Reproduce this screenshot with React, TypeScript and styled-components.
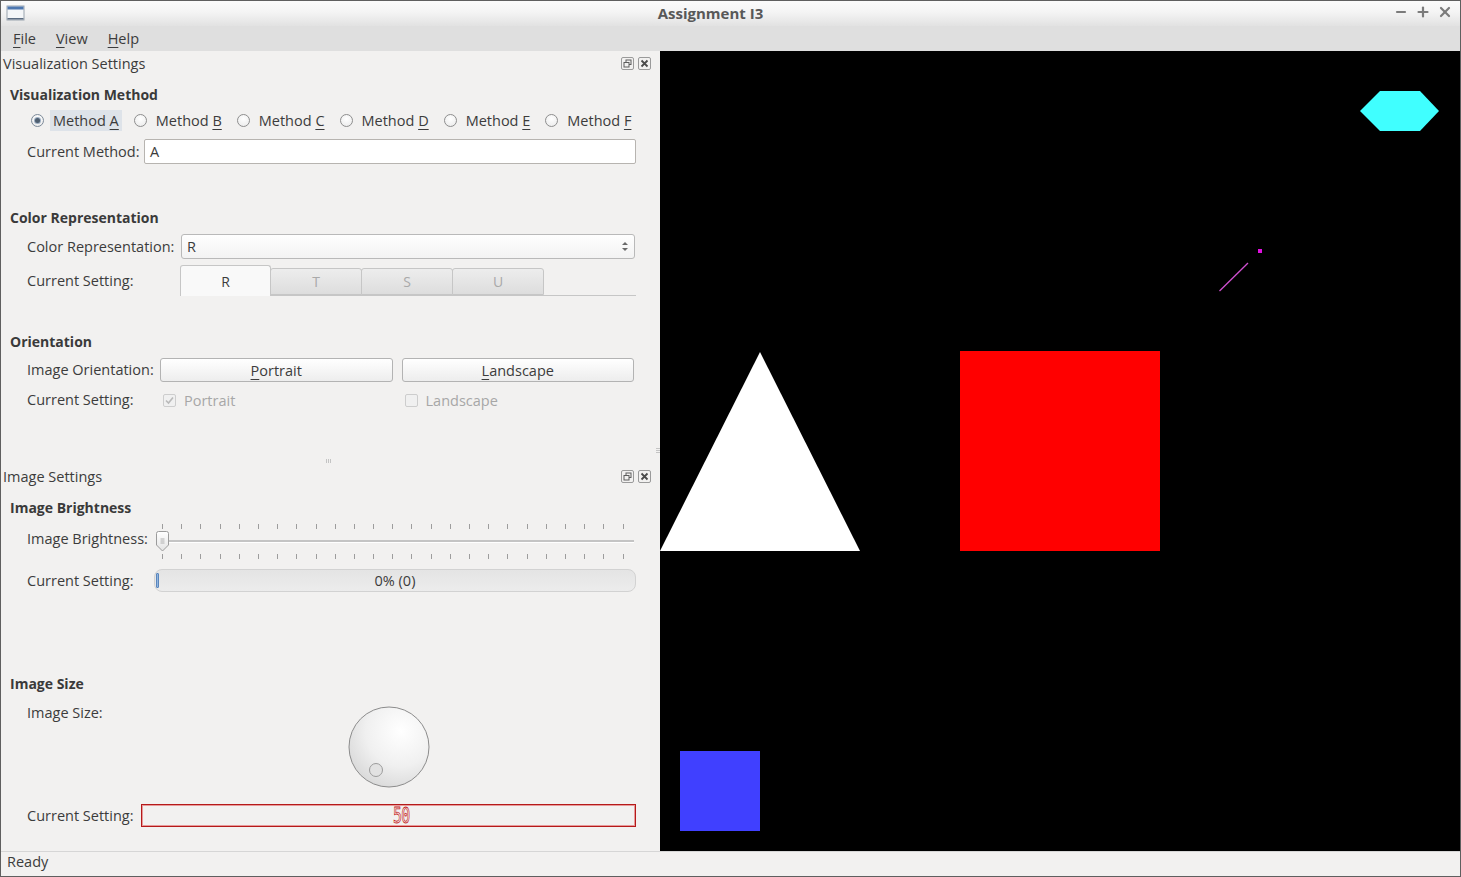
import React from 'react';
import styled, { createGlobalStyle } from 'styled-components';

const GlobalStyle = createGlobalStyle`
  html, body {
    margin: 0;
    padding: 0;
    background: #f2f1f0;
  }
  body {
    font-family: "Open Sans", "Liberation Sans", sans-serif;
    font-size: 14.5px;
    color: #3c3c3c;
  }
  * {
    box-sizing: border-box;
  }
  u {
    text-decoration-thickness: 1px;
    text-underline-offset: 3px;
  }
`;

const Window = styled.div`
  width: 1461px;
  height: 877px;
  border: 1px solid #5f5f5f;
  display: flex;
  flex-direction: column;
  background: #f2f1f0;
  overflow: hidden;
`;

const TitleBar = styled.div`
  height: 25px;
  flex-shrink: 0;
  display: grid;
  grid-template-columns: 30px 1fr 70px;
  align-items: center;
  background: linear-gradient(#fbfbfb, #f4f4f4 45%, #e2e2e2);
`;

const TitleText = styled.div`
  text-align: center;
  font-weight: 700;
  font-size: 15px;
  color: #585858;
  margin-top: -2px;
`;

const WinControls = styled.div`
  display: flex;
  gap: 10px;
  align-items: center;
  justify-content: flex-end;
  padding: 0 9px 3px 0;
`;

const MenuBar = styled.div`
  height: 25px;
  flex-shrink: 0;
  display: flex;
  align-items: center;
  padding-left: 2px;
  background: #dfdfdf;
`;

const MenuItem = styled.div`
  padding: 0 10px;
  line-height: 25px;
`;

const Main = styled.div`
  height: 800px;
  flex-shrink: 0;
  display: flex;
`;

const LeftPanel = styled.div`
  width: 659px;
  flex-shrink: 0;
  display: flex;
`;

const DockColumn = styled.div`
  width: 654px;
  display: flex;
  flex-direction: column;
`;

const VHandle = styled.div`
  width: 5px;
  display: flex;
  align-items: center;
  justify-content: center;
  padding-bottom: 2px;
`;

const HGrip = styled.div`
  display: flex;
  flex-direction: column;
  gap: 1px;
  & > span {
    display: block;
    width: 4px;
    height: 1px;
    background: #c4c4c4;
  }
`;

const Dock = styled.div<{ $h: number }>`
  height: ${(p) => p.$h}px;
  flex-shrink: 0;
  display: flex;
  flex-direction: column;
`;

const Splitter = styled.div`
  height: 8px;
  flex-shrink: 0;
  display: flex;
  justify-content: center;
  align-items: center;
  padding-top: 2px;
`;

const VGrip = styled.div`
  display: flex;
  gap: 1px;
  & > span {
    display: block;
    width: 1px;
    height: 4px;
    background: #c4c4c4;
  }
`;

const DockTitle = styled.div`
  height: 24px;
  display: flex;
  align-items: center;
  justify-content: space-between;
  padding: 0 4px 0 2px;
`;

const DockButtons = styled.div`
  display: flex;
  gap: 4px;
`;

const Group = styled.div`
  display: flex;
  flex-direction: column;
  padding: 0 19px 0 9px;
`;

const GroupTitle = styled.div<{ $mt: number }>`
  margin-top: ${(p) => p.$mt}px;
  height: 20px;
  line-height: 20px;
  font-weight: 700;
  font-size: 14px;
  color: #3a3a3a;
`;

const FormRow = styled.div<{ $label: number; $mt: number; $h: number; $align?: string }>`
  margin-top: ${(p) => p.$mt}px;
  height: ${(p) => p.$h}px;
  display: grid;
  grid-template-columns: ${(p) => p.$label}px minmax(0, 1fr);
  align-items: ${(p) => p.$align || 'center'};
  padding-left: 17px;
`;

const Label = styled.div<{ $shift?: number }>`
  line-height: 20px;
  white-space: nowrap;
  margin-top: ${(p) => p.$shift || 0}px;
`;

const RadioRow = styled.div`
  margin-top: 4px;
  height: 22px;
  display: flex;
  align-items: center;
  gap: 12px;
  padding-left: 21px;
  white-space: nowrap;
`;

const RadioItem = styled.div`
  display: flex;
  align-items: center;
  gap: 6px;
  flex-shrink: 0;
`;

const RadioCircle = styled.span<{ $checked?: boolean }>`
  width: 13px;
  height: 13px;
  flex-shrink: 0;
  border-radius: 50%;
  border: 1px solid ${(p) => (p.$checked ? '#7d8a99' : '#8e8e8e')};
  background: radial-gradient(circle at 50% 35%, #ffffff, #e9e9e9);
  display: flex;
  align-items: center;
  justify-content: center;
  &::after {
    content: '';
    display: ${(p) => (p.$checked ? 'block' : 'none')};
    width: 5px;
    height: 5px;
    border-radius: 50%;
    background: #4f5f70;
    box-shadow: 0 0 0 1px #9fb0c4;
  }
`;

const RadioText = styled.span<{ $focus?: boolean }>`
  padding: 0 3px;
  line-height: 21px;
  white-space: nowrap;
  background: ${(p) => (p.$focus ? '#dee3e9' : 'transparent')};
`;

const LineEdit = styled.div`
  height: 25px;
  background: #fff;
  border: 1px solid #b7b4b0;
  border-radius: 2px;
  padding-left: 5px;
  line-height: 23px;
`;

const Combo = styled.div`
  height: 25px;
  margin-right: 1px;
  border: 1px solid #b9b9b9;
  border-radius: 3px;
  background: linear-gradient(#fefefe, #f3f3f3);
  display: flex;
  align-items: center;
  justify-content: space-between;
  padding: 0 6px 0 5px;
`;

const ComboArrows = styled.div`
  display: flex;
  flex-direction: column;
  gap: 3px;
  & > span {
    width: 0;
    height: 0;
    border-left: 3px solid transparent;
    border-right: 3px solid transparent;
  }
  & > span:first-child {
    border-bottom: 3px solid #6a6a6a;
  }
  & > span:last-child {
    border-top: 3px solid #6a6a6a;
  }
`;

const TabBar = styled.div`
  height: 30px;
  margin-left: -1px;
  display: flex;
  align-items: flex-end;
  border-bottom: 1px solid #c6c6c6;
`;

const Tab = styled.div<{ $active?: boolean }>`
  width: ${(p) => (p.$active ? 91 : 92)}px;
  height: ${(p) => (p.$active ? 31 : 27)}px;
  margin-bottom: ${(p) => (p.$active ? -1 : 0)}px;
  margin-right: -1px;
  display: flex;
  align-items: center;
  justify-content: center;
  font-size: 14px;
  border: 1px solid #c6c6c6;
  border-bottom: ${(p) => (p.$active ? 'none' : '1px solid #c6c6c6')};
  border-radius: 3px 3px 0 0;
  color: ${(p) => (p.$active ? '#3c3c3c' : '#a9a9a9')};
  background: ${(p) => (p.$active ? '#f9f9f9' : 'linear-gradient(#ededed, #dddddd)')};
  position: relative;
  z-index: ${(p) => (p.$active ? 1 : 0)};
`;

const PairGrid = styled.div`
  display: grid;
  grid-template-columns: 1fr 1fr;
  gap: 9px;
  padding-right: 2px;
  height: 100%;
  align-items: center;
`;

const PushButton = styled.div`
  height: 24px;
  border: 1px solid #b3b3b3;
  border-radius: 3px;
  background: linear-gradient(#ffffff, #ededed);
  display: flex;
  align-items: center;
  justify-content: center;
`;

const CheckItem = styled.div`
  display: flex;
  align-items: center;
  gap: 8px;
  padding-left: 3px;
  color: #a7a7a7;
`;

const CheckBox = styled.span`
  width: 13px;
  height: 13px;
  border: 1px solid #cdcdcd;
  border-radius: 2px;
  background: #f0f0f0;
  display: flex;
  align-items: center;
  justify-content: center;
`;

const Slider = styled.div`
  position: relative;
  height: 39px;
  display: flex;
  flex-direction: column;
  justify-content: space-between;
  padding: 3px 0 1px;
`;

const TickRow = styled.div`
  display: flex;
  padding-left: 7px;
  height: 5px;
  overflow: hidden;
  & > span {
    flex-shrink: 0;
    width: 19.2px;
    height: 5px;
    border-left: 1px solid #9d9d9d;
  }
`;

const Groove = styled.div`
  margin: 0 2px 0 5px;
  height: 3px;
  border-top: 2px solid #c4c4c4;
  border-bottom: 1px solid #ffffff;
`;

const SliderHandle = styled.svg`
  position: absolute;
  left: 1px;
  top: 10px;
`;

const Progress = styled.div`
  position: relative;
  height: 23px;
  margin-left: -1px;
  border: 1px solid #d2d2d2;
  border-radius: 8px;
  background: linear-gradient(#e4e4e4, #ececec);
  display: flex;
  align-items: center;
  padding-left: 1px;
`;

const ProgressChunk = styled.span`
  width: 3px;
  height: 15px;
  border: 1px solid #5a86bd;
  border-radius: 1px;
  background: #93b6df;
`;

const ProgressText = styled.span`
  position: absolute;
  left: 0;
  right: 0;
  text-align: center;
  line-height: 21px;
`;

const DialWrap = styled.div`
  display: flex;
  justify-content: center;
  padding-top: 3px;
`;

const Lcd = styled.div`
  height: 23px;
  border: 1px solid #b51a1a;
  box-shadow: inset 0 0 0 1px #e79a9a;
  display: flex;
  align-items: center;
  justify-content: center;
`;

const LcdDigits = styled.span`
  display: inline-block;
  font-family: "DejaVu Sans Mono", "Liberation Mono", monospace;
  font-size: 22px;
  line-height: 21px;
  color: transparent;
  -webkit-text-stroke: 0.8px #c41414;
  transform: scaleX(0.68);
  margin-left: 26px;
  letter-spacing: -1px;
`;

const StatusBar = styled.div`
  height: 25px;
  flex-shrink: 0;
  border-top: 1px solid #d6d6d6;
  padding-left: 6px;
  line-height: 20px;
`;

const Canvas = styled.div`
  width: 800px;
  height: 800px;
  background: #000;
  flex-shrink: 0;
`;

const WindowIcon = () => (
  <svg width="20" height="18" viewBox="0 0 20 18">
    <rect x="1" y="2" width="17" height="14" fill="#f4f6f8" stroke="#9aa4ae" />
    <rect x="1.5" y="2.5" width="16" height="3" fill="#4d77b0" />
    <rect x="1.5" y="14" width="16" height="1.5" fill="#5a6b80" />
  </svg>
);

const CtrlIcon = ({ kind }: { kind: 'min' | 'max' | 'close' }) => (
  <svg width="12" height="12" viewBox="0 0 12 12" stroke="#7b7b7b" strokeWidth="2.2" strokeLinecap="round">
    {kind === 'min' && <line x1="2" y1="6" x2="10" y2="6" />}
    {kind === 'max' && (
      <>
        <line x1="1.5" y1="6" x2="10.5" y2="6" />
        <line x1="6" y1="1.5" x2="6" y2="10.5" />
      </>
    )}
    {kind === 'close' && (
      <>
        <line x1="2" y1="2" x2="10" y2="10" />
        <line x1="10" y1="2" x2="2" y2="10" />
      </>
    )}
  </svg>
);

const DockFloatIcon = () => (
  <svg width="13" height="13" viewBox="0 0 13 13" fill="none" stroke="#5c5c5c">
    <rect x="0.5" y="0.5" width="12" height="12" rx="1.5" stroke="#9a9a9a" />
    <rect x="5" y="3" width="5" height="4.5" />
    <rect x="3" y="5.5" width="5" height="4.5" fill="#f2f1f0" />
  </svg>
);

const DockCloseIcon = () => (
  <svg width="13" height="13" viewBox="0 0 13 13" fill="none">
    <rect x="0.5" y="0.5" width="12" height="12" rx="1.5" stroke="#9a9a9a" />
    <path d="M3.5 3.5 L9.5 9.5 M9.5 3.5 L3.5 9.5" stroke="#4a4a4a" strokeWidth="1.8" />
  </svg>
);

const HandleIcon = () => (
  <SliderHandle width="13" height="21" viewBox="0 0 13 21">
    <defs>
      <linearGradient id="hg" x1="0" y1="0" x2="0" y2="1">
        <stop offset="0" stopColor="#ffffff" />
        <stop offset="1" stopColor="#e3e3e3" />
      </linearGradient>
    </defs>
    <path d="M2.5 0.5 H10.5 Q12.5 0.5 12.5 2.5 V14 L6.5 20 L0.5 14 V2.5 Q0.5 0.5 2.5 0.5 Z" fill="url(#hg)" stroke="#9b9b9b" />
    <path d="M4.5 8 H8.5 M4.5 10 H8.5 M4.5 12 H8.5" stroke="#b0b0b0" />
  </SliderHandle>
);

const Dial = () => (
  <svg width="82" height="82" viewBox="0 0 82 82">
    <defs>
      <radialGradient id="dg" cx="0.65" cy="0.3" r="0.8">
        <stop offset="0" stopColor="#ffffff" />
        <stop offset="0.55" stopColor="#f0f0f0" />
        <stop offset="1" stopColor="#d6d6d6" />
      </radialGradient>
    </defs>
    <circle cx="41" cy="41" r="40" fill="url(#dg)" stroke="#8c8c8c" />
    <circle cx="28" cy="64" r="6.5" fill="#e2e2e2" stroke="#9c9c9c" />
  </svg>
);

const CheckMark = () => (
  <svg width="11" height="11" viewBox="0 0 11 11">
    <path d="M2 5.5 L4.5 8 L9 2.5" fill="none" stroke="#b9b9b9" strokeWidth="1.6" />
  </svg>
);

const methods = ['A', 'B', 'C', 'D', 'E', 'F'];
const tabs = ['R', 'T', 'S', 'U'];
const ticks = Array.from({ length: 25 }, (_, i) => i);

const App: React.FC = () => {
  return (
    <>
      <GlobalStyle />
      <Window>
        <TitleBar>
          <div style={{ paddingLeft: 5, paddingTop: 3 }}>
            <WindowIcon />
          </div>
          <TitleText>Assignment I3</TitleText>
          <WinControls>
            <CtrlIcon kind="min" />
            <CtrlIcon kind="max" />
            <CtrlIcon kind="close" />
          </WinControls>
        </TitleBar>

        <MenuBar>
          <MenuItem><u>F</u>ile</MenuItem>
          <MenuItem><u>V</u>iew</MenuItem>
          <MenuItem><u>H</u>elp</MenuItem>
        </MenuBar>

        <Main>
          <LeftPanel>
            <DockColumn>
              <Dock $h={405}>
                <DockTitle>
                  <span>Visualization Settings</span>
                  <DockButtons>
                    <DockFloatIcon />
                    <DockCloseIcon />
                  </DockButtons>
                </DockTitle>
                <Group>
                  <GroupTitle $mt={10}>Visualization Method</GroupTitle>
                  <RadioRow>
                    {methods.map((m, i) => (
                      <RadioItem key={m}>
                        <RadioCircle $checked={i === 0} />
                        <RadioText $focus={i === 0}>
                          Method <u>{m}</u>
                        </RadioText>
                      </RadioItem>
                    ))}
                  </RadioRow>
                  <FormRow $label={117} $mt={8} $h={25}>
                    <Label>Current Method:</Label>
                    <LineEdit>A</LineEdit>
                  </FormRow>

                  <GroupTitle $mt={44}>Color Representation</GroupTitle>
                  <FormRow $label={154} $mt={6} $h={25}>
                    <Label>Color Representation:</Label>
                    <Combo>
                      <span>R</span>
                      <ComboArrows>
                        <span />
                        <span />
                      </ComboArrows>
                    </Combo>
                  </FormRow>
                  <FormRow $label={154} $mt={7} $h={30}>
                    <Label>Current Setting:</Label>
                    <TabBar>
                      {tabs.map((t, i) => (
                        <Tab key={t} $active={i === 0}>{t}</Tab>
                      ))}
                    </TabBar>
                  </FormRow>

                  <GroupTitle $mt={36}>Orientation</GroupTitle>
                  <FormRow $label={133} $mt={6} $h={24}>
                    <Label>Image Orientation:</Label>
                    <PairGrid>
                      <PushButton><u>P</u>ortrait</PushButton>
                      <PushButton><u>L</u>andscape</PushButton>
                    </PairGrid>
                  </FormRow>
                  <FormRow $label={133} $mt={8} $h={20}>
                    <Label>Current Setting:</Label>
                    <PairGrid>
                      <CheckItem>
                        <CheckBox><CheckMark /></CheckBox>
                        Portrait
                      </CheckItem>
                      <CheckItem>
                        <CheckBox />
                        Landscape
                      </CheckItem>
                    </PairGrid>
                  </FormRow>
                </Group>
              </Dock>

              <Splitter>
                <VGrip>
                  <span />
                  <span />
                  <span />
                </VGrip>
              </Splitter>

              <Dock $h={387}>
                <DockTitle>
                  <span>Image Settings</span>
                  <DockButtons>
                    <DockFloatIcon />
                    <DockCloseIcon />
                  </DockButtons>
                </DockTitle>
                <Group>
                  <GroupTitle $mt={10}>Image Brightness</GroupTitle>
                  <FormRow $label={128} $mt={3} $h={39}>
                    <Label $shift={-4}>Image Brightness:</Label>
                    <Slider>
                      <TickRow>
                        {ticks.map((t) => <span key={t} />)}
                      </TickRow>
                      <Groove />
                      <TickRow>
                        {ticks.map((t) => <span key={t} />)}
                      </TickRow>
                      <HandleIcon />
                    </Slider>
                  </FormRow>
                  <FormRow $label={128} $mt={9} $h={23}>
                    <Label>Current Setting:</Label>
                    <Progress>
                      <ProgressChunk />
                      <ProgressText>0% (0)</ProgressText>
                    </Progress>
                  </FormRow>

                  <GroupTitle $mt={82}>Image Size</GroupTitle>
                  <FormRow $label={114} $mt={9} $h={85} $align="start">
                    <Label>Image Size:</Label>
                    <DialWrap>
                      <Dial />
                    </DialWrap>
                  </FormRow>
                  <FormRow $label={114} $mt={16} $h={23}>
                    <Label>Current Setting:</Label>
                    <Lcd>
                      <LcdDigits>50</LcdDigits>
                    </Lcd>
                  </FormRow>
                </Group>
              </Dock>
            </DockColumn>
            <VHandle>
              <HGrip>
                <span />
                <span />
                <span />
              </HGrip>
            </VHandle>
          </LeftPanel>

          <Canvas>
            <svg width="800" height="800" viewBox="0 0 800 800">
              <polygon points="100,301 0,500 200,500" fill="#ffffff" />
              <rect x="300" y="300" width="200" height="200" fill="#ff0000" />
              <rect x="20" y="700" width="80" height="80" fill="#4040ff" />
              <polygon points="700,60 720,40 760,40 779,60 760,80 720,80" fill="#40ffff" />
              <rect x="598" y="198" width="4" height="4" fill="#e010e0" />
              <line x1="559.5" y1="240" x2="588" y2="212" stroke="#d050d0" strokeWidth="1.3" />
            </svg>
          </Canvas>
        </Main>

        <StatusBar>Ready</StatusBar>
      </Window>
    </>
  );
};

export default App;
